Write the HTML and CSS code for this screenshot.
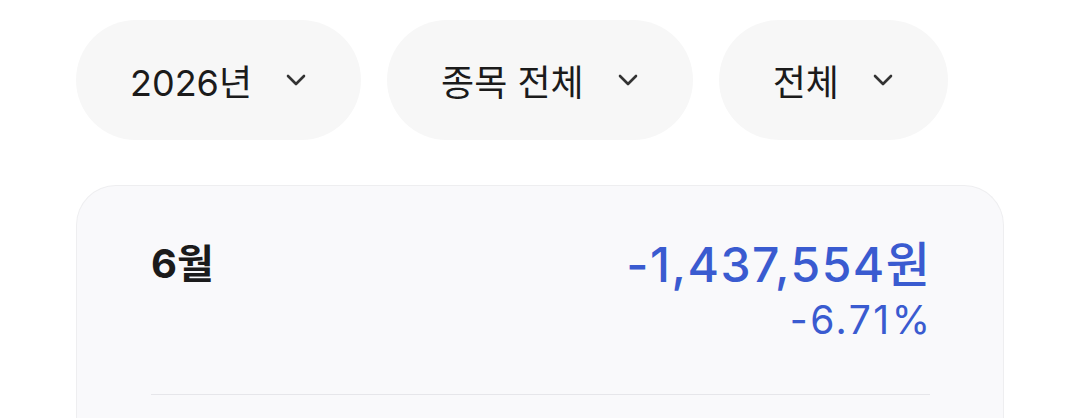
FILE: index.html
```html
<!DOCTYPE html>
<html>
  <head>
    <meta charset="utf-8" />
    <title>월별 손익</title>
    <link rel="stylesheet" href="styles.css">
  </head>

  <body>
    <div class="filters">
      <button class="pill">
        2026년
        <svg class="chev" viewBox="0 0 20 12"><path d="M2 2l8 8 8-8" /></svg>
      </button>
      <button class="pill">
        종목 전체
        <svg class="chev" viewBox="0 0 20 12"><path d="M2 2l8 8 8-8" /></svg>
      </button>
      <button class="pill">
        전체
        <svg class="chev" viewBox="0 0 20 12"><path d="M2 2l8 8 8-8" /></svg>
      </button>
    </div>

    <div class="month-card">
      <div class="month-row">
        <div class="month">6월</div>
        <div class="result">
          <div class="amount">-1,437,554원</div>
          <div class="rate">-6.71%</div>
        </div>
      </div>
      <hr class="divider" />
    </div>
  </body>
</html>
```

FILE: styles.css
```css
* {
  box-sizing: border-box;
}

html,
body {
  margin: 0;
  padding: 0;
}

body {
  font-family: Inter, "Noto Sans CJK KR", sans-serif;
  background: #ffffff;
  color: #1b1b1b;
  padding: 20px 76px 0 76px;
}

.filters {
  display: flex;
  gap: 26px;
}

.pill {
  display: flex;
  align-items: center;
  gap: 34px;
  height: 120px;
  padding: 0 55px 0 54px;
  border: none;
  border-radius: 60px;
  background: #f7f7f7;
  font-family: inherit;
  font-size: 36px;
  color: #1b1b1b;
}

.chev {
  width: 20px;
  height: 12px;
  fill: none;
  stroke: #333333;
  stroke-width: 2.6;
  stroke-linecap: round;
  stroke-linejoin: round;
}

.month-card {
  width: 928px;
  margin-top: 45px;
  padding: 50px 73px 0 74px;
  background: #f9f9fb;
  border: 1px solid #eeeef0;
  border-bottom: none;
  border-radius: 40px 40px 0 0;
  height: 240px;
}

.month-row {
  display: flex;
  justify-content: space-between;
  align-items: flex-start;
}

.month {
  font-size: 40px;
  font-weight: 700;
  line-height: 56px;
}

.result {
  text-align: right;
  color: #3a5bd0;
}

/* wider tracking so the figures read like the app's numeric face */
.amount {
  font-size: 48px;
  font-weight: 500;
  line-height: 58px;
  letter-spacing: 1.5px;
  margin-right: -1.5px;
}

.rate {
  font-size: 39px;
  line-height: 52px;
  letter-spacing: 2.5px;
  margin-right: -2.5px;
}

.divider {
  margin: 48px 0 0 0;
  border: none;
  border-top: 1px solid #e6e6ea;
}
```
